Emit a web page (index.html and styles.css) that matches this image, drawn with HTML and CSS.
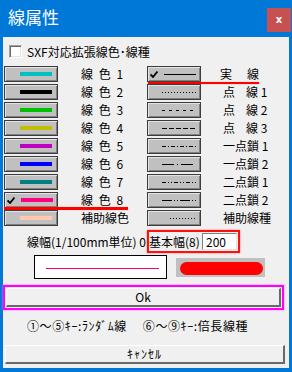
FILE: index.html
```html
<!DOCTYPE html>
<html lang="ja">
<head>
    <meta charset="UTF-8">
    <title>線属性</title>
    <link rel="stylesheet" href="styles.css">
</head>
<body>
<div class="window">
    <div class="titlebar">
        <span class="title">線属性</span>
        <span class="close">x</span>
    </div>
    <div class="content">
        <div class="sxf"><span class="checkbox"></span>SXF対応拡張線色･線種</div>

        <div class="rows">
            <div class="row">
                <span class="btn"><i class="swatch c1"></i></span>
                <span class="label">線 色 1</span>
                <span class="btn">
                    <svg class="check" width="8" height="7" viewBox="0 0 8 7"><path d="M0.5 3.5 L3 6 L7.5 0.5" fill="none" stroke="#000" stroke-width="1.8"/></svg>
                    <svg class="ls first" width="32" height="1"><line x1="0" y1="0.5" x2="32" y2="0.5" stroke="#000"/></svg>
                </span>
                <span class="rlabel solid"><span class="sp wide">実</span>線</span>
                <span class="mark mark-right"></span>
            </div>
            <div class="row">
                <span class="btn"><i class="swatch c2"></i></span>
                <span class="label">線 色 2</span>
                <span class="btn"><svg class="ls" width="34" height="1"><line x1="0" y1="0.5" x2="34" y2="0.5" stroke="#000" stroke-dasharray="1 2"/></svg></span>
                <span class="rlabel"><span class="sp">点</span>線 1</span>
            </div>
            <div class="row">
                <span class="btn"><i class="swatch c3"></i></span>
                <span class="label">線 色 3</span>
                <span class="btn"><svg class="ls" width="34" height="1"><line x1="0" y1="0.5" x2="34" y2="0.5" stroke="#000" stroke-dasharray="3 4"/></svg></span>
                <span class="rlabel"><span class="sp">点</span>線 2</span>
            </div>
            <div class="row">
                <span class="btn"><i class="swatch c4"></i></span>
                <span class="label">線 色 4</span>
                <span class="btn"><svg class="ls" width="34" height="1"><line x1="0" y1="0.5" x2="34" y2="0.5" stroke="#000" stroke-dasharray="5 2"/></svg></span>
                <span class="rlabel"><span class="sp">点</span>線 3</span>
            </div>
            <div class="row">
                <span class="btn"><i class="swatch c5"></i></span>
                <span class="label">線 色 5</span>
                <span class="btn"><svg class="ls" width="34" height="1"><line x1="0" y1="0.5" x2="34" y2="0.5" stroke="#000" stroke-dasharray="4 2 1 2"/></svg></span>
                <span class="rlabel">一点鎖 1</span>
            </div>
            <div class="row">
                <span class="btn"><i class="swatch c6"></i></span>
                <span class="label">線 色 6</span>
                <span class="btn"><svg class="ls" width="34" height="1"><line x1="0" y1="0.5" x2="34" y2="0.5" stroke="#000" stroke-dasharray="12 3 1 3"/></svg></span>
                <span class="rlabel">一点鎖 2</span>
            </div>
            <div class="row">
                <span class="btn"><i class="swatch c7"></i></span>
                <span class="label">線 色 7</span>
                <span class="btn"><svg class="ls" width="34" height="1"><line x1="0" y1="0.5" x2="34" y2="0.5" stroke="#000" stroke-dasharray="4 2 1 2 1 2"/></svg></span>
                <span class="rlabel">二点鎖 1</span>
            </div>
            <div class="row">
                <span class="btn">
                    <svg class="check" width="8" height="7" viewBox="0 0 8 7"><path d="M0.5 3.5 L3 6 L7.5 0.5" fill="none" stroke="#000" stroke-width="1.8"/></svg>
                    <i class="swatch c8 after-check"></i>
                </span>
                <span class="label">線 色 8</span>
                <span class="btn"><svg class="ls" width="34" height="1"><line x1="0" y1="0.5" x2="34" y2="0.5" stroke="#000" stroke-dasharray="10 2 1 2 1 2"/></svg></span>
                <span class="rlabel">二点鎖 2</span>
                <span class="mark mark-left"></span>
            </div>
            <div class="row">
                <span class="btn"><i class="swatch c9"></i></span>
                <span class="label">補助線色</span>
                <span class="btn"><svg class="ls aux" width="26" height="1"><line x1="0" y1="0.5" x2="26" y2="0.5" stroke="#000" stroke-dasharray="1 2"/></svg></span>
                <span class="rlabel">補助線種</span>
            </div>
        </div>

        <div class="width-row">
            <span class="width-text">線幅(1/100mm単位) 0:</span>
            <span class="highlight">
                基本幅(8)
                <span class="input">200</span>
            </span>
        </div>

        <div class="preview-row">
            <span class="preview"><i class="preview-line"></i></span>
            <span class="sample"><i class="pill"></i></span>
        </div>

        <div class="ok-wrap">
            <div class="button ok">Ok</div>
        </div>

        <div class="info">①～⑤ｷｰ:ﾗﾝﾀﾞﾑ線　 ⑥～⑨ｷｰ:倍長線種</div>

        <div class="button cancel">ｷｬﾝｾﾙ</div>
    </div>
</div>
</body>
</html>
```

FILE: styles.css
```css
body{
    margin: 0;
    background-color: #0078d7;
    font-family: "Noto Sans CJK JP", "Noto Sans", sans-serif;
    font-size: 12px;
    color: #000;
}
.window{
    width: 292px;
    height: 372px;
    display: flex;
    flex-direction: column;
    background-color: #0078d7;
}
.titlebar{
    height: 37px;
    flex-shrink: 0;
    display: flex;
    align-items: flex-start;
}
.title{
    color: #fff;
    font-size: 17px;
    line-height: 20px;
    margin: 7px 0 0 8px;
}
.close{
    margin: 8px 1px 0 auto;
    width: 24px;
    height: 24px;
    background-color: #c75050;
    color: #fff;
    font: bold 10px/23px "DejaVu Sans", sans-serif;
    text-align: center;
}
.content{
    flex: 1;
    margin: 0 3px 4px;
    background-color: #f0f0f0;
    display: flex;
    flex-direction: column;
}

/* checkbox */
.sxf{
    display: flex;
    align-items: center;
    height: 13px;
    line-height: 13px;
    margin-top: 8px;
    padding-left: 6px;
    white-space: nowrap;
}
.checkbox{
    width: 13px;
    height: 13px;
    box-sizing: border-box;
    margin-right: 5px;
    background-color: #fff;
    border: 1px solid;
    border-color: #a0a0a0 #fff #fff #a0a0a0;
    box-shadow: inset 1px 1px 0 #696969, inset -1px -1px 0 #e3e3e3;
}

/* colour / line type rows */
.rows{
    margin-top: 8px;
}
.row{
    position: relative;
    display: flex;
    height: 16px;
    margin-bottom: 2px;
    padding-left: 1px;
    line-height: 16px;
    white-space: nowrap;
}
.btn{
    width: 54px;
    height: 16px;
    box-sizing: border-box;
    display: flex;
    align-items: center;
    background-color: #c0c0c0;
    border: 1px solid #3c3c3c;
    box-shadow: inset 1px 1px 0 #e3e3e3, inset -1px -1px 0 #808080;
}
.swatch{
    display: block;
    width: 32px;
    height: 4px;
    margin-left: 15px;
}
.swatch.after-check{
    margin-left: 6px;
}
.c1{ background-color: #00c0c0; }
.c2{ background-color: #000; }
.c3{ background-color: #00c000; }
.c4{ background-color: #c0c000; }
.c5{ background-color: #c000c0; }
.c6{ background-color: #0000ff; }
.c7{ background-color: #008080; }
.c8{ background-color: #ff0080; }
.c9{ background-color: #ffc8b0; }

.check{
    display: block;
    margin-left: 2px;
}
.ls{
    display: block;
    margin-left: 14px;
    shape-rendering: crispEdges;
}
.ls.first{
    margin-left: 6px;
}
.ls.aux{
    margin-left: 22px;
}
.label{
    width: 89px;
    box-sizing: border-box;
    padding-left: 23px;
    word-spacing: 3px;
}
.rlabel{
    padding-left: 22px;
}
.rlabel.solid{
    padding-left: 19px;
}
.sp{
    margin-right: 11px;
}
.sp.wide{
    margin-right: 15px;
}

/* red annotation strokes */
.mark{
    position: absolute;
    height: 2px;
    background-color: #ff0000;
    box-shadow: 0 0 1px #ff6060;
}
.mark-right{
    left: 145px;
    top: 16px;
    width: 111px;
}
.mark-left{
    left: 1px;
    top: 15px;
    width: 124px;
    height: 3px;
}

/* line width */
.width-row{
    display: flex;
    align-items: center;
    height: 23px;
    margin-top: 2px;
    padding-left: 24px;
    white-space: nowrap;
}
.width-text{
    width: 120px;
}
.highlight{
    width: 93px;
    height: 23px;
    box-sizing: border-box;
    display: flex;
    align-items: center;
    border: 2px solid #ff1010;
    box-shadow: 0 0 2px #ff8080;
    padding-right: 1px;
}
.input{
    margin-left: auto;
    width: 35px;
    height: 17px;
    box-sizing: border-box;
    padding-left: 3px;
    line-height: 15px;
    background-color: #fff;
    border: 1px solid;
    border-color: #828282 #e3e3e3 #e3e3e3 #828282;
}

/* preview */
.preview-row{
    display: flex;
    align-items: flex-start;
    margin-top: 2px;
    padding-left: 31px;
}
.preview{
    width: 133px;
    height: 24px;
    box-sizing: border-box;
    background-color: #fff;
    border: 1px solid #000;
    padding: 12px 0 0 11px;
}
.preview-line{
    display: block;
    width: 113px;
    height: 1px;
    background-color: #ff0080;
}
.sample{
    width: 89px;
    height: 19px;
    box-sizing: border-box;
    margin: 3px 0 0 9px;
    padding: 4px 2px 2px 4px;
    background-color: #c0c0c0;
}
.pill{
    display: block;
    height: 13px;
    border-radius: 7px;
    background-color: #ff0000;
}

/* buttons */
.button{
    text-align: center;
    background-color: #f0f0f0;
    border-top: 1px solid #fff;
    border-left: 1px solid #fff;
    border-right: 2px solid #696969;
    border-bottom: 2px solid #696969;
    box-sizing: border-box;
}
.ok-wrap{
    width: 281px;
    height: 25px;
    box-sizing: border-box;
    margin-top: 6px;
    padding: 1px;
    border: 2px solid #ff00ff;
    box-shadow: 0 0 2px #ff80ff;
}
.ok{
    height: 19px;
    line-height: 16px;
}
.info{
    margin-top: 8px;
    padding-left: 24px;
    line-height: 16px;
    letter-spacing: 0.6px;
    white-space: nowrap;
}
.cancel{
    width: 280px;
    height: 19px;
    line-height: 16px;
    letter-spacing: 1px;
    margin: 11px 0 0 2px;
}
```
